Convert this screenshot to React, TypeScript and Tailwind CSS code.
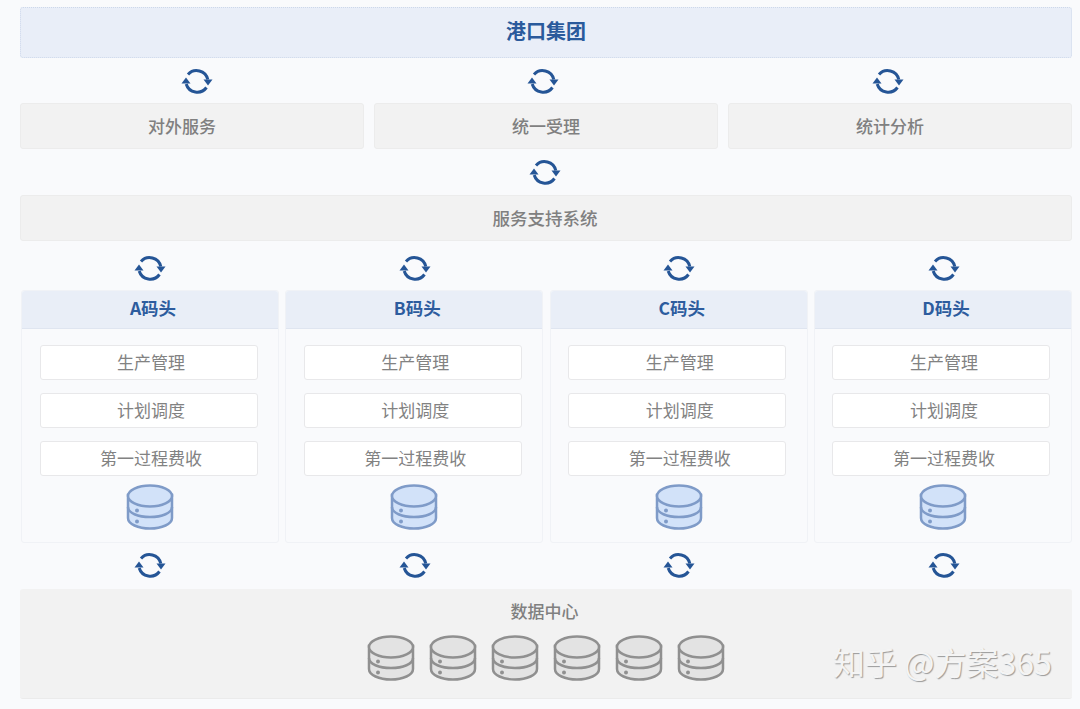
const font = "font-['Noto_Sans_CJK_SC','Noto_Sans',sans-serif]";

function SyncIcon() {
  return (
    <svg viewBox="0 0 32 30" className="w-[32px] h-[30px] shrink-0">
      <path d="M7 7.5A11.5 11.5 0 0 1 26.8 12.5" fill="none" stroke="#255596" strokeWidth="3" />
      <path d="M25.5 20.5A11.5 11.5 0 0 1 5.2 17" fill="none" stroke="#255596" strokeWidth="3" />
      <polygon points="22.5,12.5 31.5,12.5 27,18.5" fill="#255596" />
      <polygon points="0.5,16.5 9.5,16.5 5,10.5" fill="#255596" />
    </svg>
  );
}

function Database({ grey }: { grey?: boolean }) {
  const fill = grey ? "#e3e3e3" : "#d2e2f9";
  const stroke = grey ? "#909090" : "#7f9bc8";
  return (
    <svg viewBox="0 0 48 46" className="w-[48px] h-[46px] shrink-0">
      <path
        d="M2 11V34C2 40 12 44.500 24 44.500S46 40 46 34V11Z"
        fill={fill}
        stroke={stroke}
        strokeWidth="2.500"
      />
      <ellipse cx="24" cy="12" rx="22" ry="10.500" fill={fill} stroke={stroke} strokeWidth="2.500" />
      <path d="M2 23C2 29 12 33 24 33S46 29 46 23" fill="none" stroke={stroke} strokeWidth="2.500" />
      <circle cx="11" cy="26.500" r="2" fill={stroke} />
      <circle cx="11" cy="37.500" r="2" fill={stroke} />
    </svg>
  );
}

function Dock({ name }: { name: string }) {
  const items = ["生产管理", "计划调度", "第一过程费收"];
  return (
    <div className="w-[258px] h-[253px] flex flex-col rounded-[3px] border border-[#f0f2f6]">
      <div className="h-[38px] flex items-center justify-center bg-[#e9eef7] border-b border-[#dfe5f0] rounded-t-[3px] pb-[3px] pl-[6px] text-[17.5px] font-bold text-[#2d5c9e]">
        {name}
      </div>
      <div className="flex flex-col items-center gap-[13px] pt-[16px] pr-[3px]">
        {items.map((item) => (
          <div
            key={item}
            className="w-[218px] h-[35px] flex items-center justify-center bg-white border border-[#e8e8ea] rounded-[3px] pb-[2px] pl-[5px] text-[17px] text-[#828282]"
          >
            {item}
          </div>
        ))}
      </div>
      <div className="flex justify-center mt-[8px]">
        <Database />
      </div>
    </div>
  );
}

export default function App() {
  const docks = ["A码头", "B码头", "C码头", "D码头"];
  const services = [
    { label: "对外服务", cls: "pr-[20px]" },
    { label: "统一受理", cls: "" },
    { label: "统计分析", cls: "pr-[20px]" },
  ];

  return (
    <div className={`relative w-[1080px] h-[709px] overflow-hidden bg-[#f9fafc] pt-[7px] pl-[20px] ${font}`}>
      <div className="w-[1052px] h-[51px] flex items-center justify-center bg-[#e9eef8] border border-dotted border-[#cdd8ea] rounded-[3px] pb-[3px] text-[20px] font-bold text-[#2a5a9c]">
        港口集团
      </div>

      <div className="flex gap-[313.500px] pl-[161px] pt-[9px] h-[45px]">
        <SyncIcon />
        <SyncIcon />
        <SyncIcon />
      </div>

      <div className="flex gap-[10px]">
        {services.map((s) => (
          <div
            key={s.label}
            className={`w-[344px] h-[46px] flex items-center justify-center bg-[#f2f2f2] border border-[#ececec] rounded-[3px] text-[17px] font-medium text-[#808080] ${s.cls}`}
          >
            {s.label}
          </div>
        ))}
      </div>

      <div className="flex justify-center w-[1050px] pt-[9px] h-[46px]">
        <SyncIcon />
      </div>

      <div className="w-[1052px] h-[46px] flex items-center justify-center bg-[#f2f2f2] border border-[#ececec] rounded-[3px] pr-[2px] text-[17.5px] font-medium text-[#808080]">
        服务支持系统
      </div>

      <div className="flex gap-[232.500px] pl-[114px] pt-[13px] h-[49px]">
        <SyncIcon />
        <SyncIcon />
        <SyncIcon />
        <SyncIcon />
      </div>

      <div className="flex gap-[6.330px] pl-[1px]">
        {docks.map((d) => (
          <Dock key={d} name={d} />
        ))}
      </div>

      <div className="flex gap-[232.500px] pl-[114px] pt-[8px] h-[46px]">
        <SyncIcon />
        <SyncIcon />
        <SyncIcon />
        <SyncIcon />
      </div>

      <div className="w-[1052px] h-[110px] flex flex-col items-center bg-[#f2f2f2] border-b border-[#ebebeb] rounded-[3px] pt-[10px]">
        <div className="text-[17px] leading-[24px] font-medium text-[#808080] pr-[3px]">数据中心</div>
        <div className="flex gap-[14px] mt-[12px]">
          {[0, 1, 2, 3, 4, 5].map((i) => (
            <Database key={i} grey />
          ))}
        </div>
      </div>

      <div className="absolute left-[833px] top-[639px] text-[32px] leading-[44px] whitespace-nowrap text-[#f4f4f4] [text-shadow:1px_1px_1px_#9a9a9a]">
        知乎 @方案365
      </div>
    </div>
  );
}
